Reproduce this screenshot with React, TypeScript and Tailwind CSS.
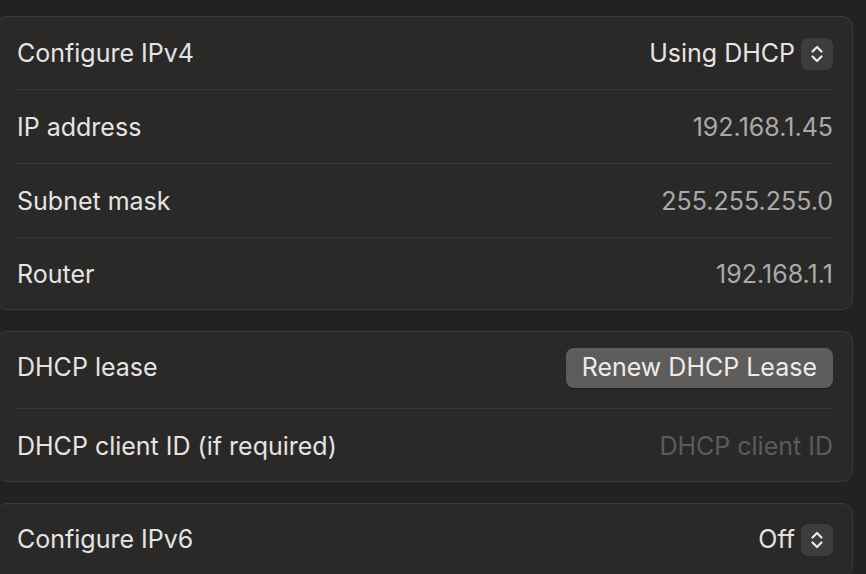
import React from "react";

function Stepper() {
  return (
    <span className="ml-[6px] grid h-[32px] w-[32px] place-items-center rounded-[7px] bg-[#3e3d3c]">
      <svg viewBox="0 0 16 20" className="h-[20px] w-[16px]" fill="none" stroke="#ececec" strokeWidth="2.2" strokeLinecap="round" strokeLinejoin="round">
        <path d="M3.5 7.5 8 3l4.5 4.5" />
        <path d="M3.5 12.5 8 17l4.5-4.5" />
      </svg>
    </span>
  );
}

function Row({
  label,
  children,
  last,
  h = "h-[73px]",
}: {
  label: string;
  children: React.ReactNode;
  last?: boolean;
  h?: string;
}) {
  return (
    <div className={`flex items-center justify-between ${h} ${last ? "" : "border-b border-[#3a3938]"}`}>
      <span className="text-[#e4e4e4]">{label}</span>
      <div className="flex items-center">{children}</div>
    </div>
  );
}

export default function App() {
  return (
    <div
      className="min-h-screen overflow-hidden bg-[#232221] pt-[16px] text-[25px]"
      style={{ fontFamily: "Inter, 'Noto Sans', sans-serif" }}
    >
      <div className="flex w-[857px] -translate-x-[4px] flex-col gap-[21px]">
        <section className="rounded-[11px] border border-[#3b3a39] bg-[#2a2928] pl-[20px] pr-[19px]">
          <Row label="Configure IPv4" h="h-[73px] pt-[2px]">
            <span className="text-[#e4e4e4]">Using DHCP</span>
            <Stepper />
          </Row>
          <Row label="IP address" h="h-[74px] pt-[2px]">
            <span className="text-[#a9a9a9]">192.168.1.45</span>
          </Row>
          <Row label="Subnet mask" h="h-[74px] pt-[2px]">
            <span className="text-[#a9a9a9]">255.255.255.0</span>
          </Row>
          <Row label="Router" h="h-[71px] pt-[3px]" last>
            <span className="text-[#a9a9a9]">192.168.1.1</span>
          </Row>
        </section>

        <section className="rounded-[11px] border border-[#3b3a39] bg-[#2a2928] pl-[20px] pr-[19px]">
          <Row label="DHCP lease" h="h-[77px] pb-[4px]">
            <button className="h-[40px] rounded-[8px] bg-[#5e5d5c] px-[16px] text-[#ececec] shadow-[0_1px_1px_rgba(0,0,0,0.3)]">
              Renew DHCP Lease
            </button>
          </Row>
          <Row label="DHCP client ID (if required)" h="h-[72px] pt-[4px]" last>
            <span className="text-[#5c5b5a]">DHCP client ID</span>
          </Row>
        </section>

        <section className="rounded-[11px] border border-[#3b3a39] bg-[#2a2928] pl-[20px] pr-[19px]">
          <Row label="Configure IPv6" h="h-[72px]" last>
            <span className="text-[#e4e4e4]">Off</span>
            <Stepper />
          </Row>
        </section>
      </div>
    </div>
  );
}
